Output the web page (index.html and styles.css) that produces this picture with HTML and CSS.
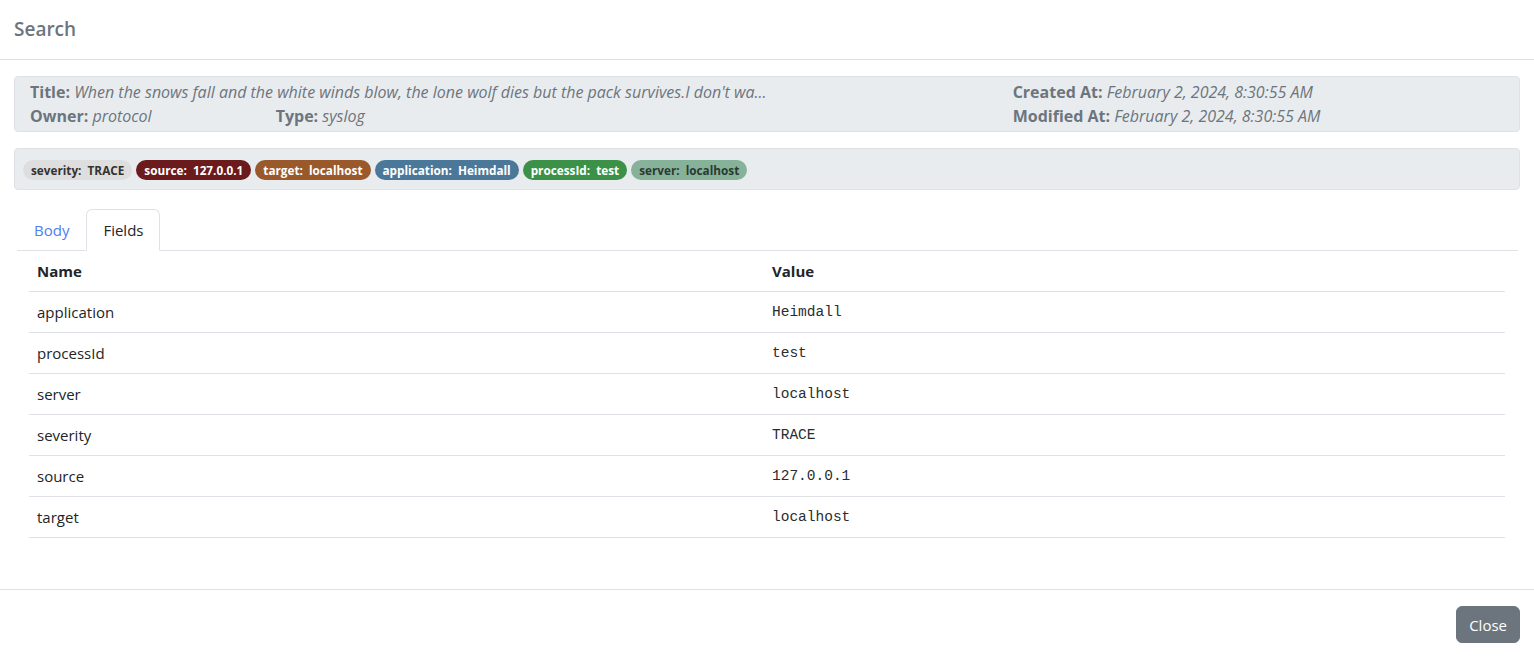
FILE: index.html
```html
<!DOCTYPE html>
<html lang="en">
<head>
<meta charset="utf-8">
<title>Search</title>
<link rel="stylesheet" href="styles.css">
</head>
<body>
<div class="modal">
  <div class="modal-header">
    <h5 class="modal-title">Search</h5>
  </div>
  <div class="modal-body">
    <div class="info-panel">
      <div class="info-row">
        <div class="col-8 truncate"><span class="lbl">Title:</span> <span class="val">When the snows fall and the white winds blow, the lone wolf dies but the pack survives.I don't wa...</span></div>
        <div class="col-4"><span class="lbl">Created At:</span> <span class="val">February 2, 2024, 8:30:55 AM</span></div>
      </div>
      <div class="info-row">
        <div class="col-2"><span class="lbl">Owner:</span> <span class="val">protocol</span></div>
        <div class="col-6"><span class="lbl">Type:</span> <span class="val">syslog</span></div>
        <div class="col-4"><span class="lbl">Modified At:</span> <span class="val">February 2, 2024, 8:30:55 AM</span></div>
      </div>
    </div>

    <div class="tag-panel">
      <span class="badge b-severity">severity:&nbsp; TRACE</span>
      <span class="badge b-source">source:&nbsp; 127.0.0.1</span>
      <span class="badge b-target">target:&nbsp; localhost</span>
      <span class="badge b-application">application:&nbsp; Heimdall</span>
      <span class="badge b-process">processId:&nbsp; test</span>
      <span class="badge b-server">server:&nbsp; localhost</span>
    </div>

    <div class="tabs">
      <a class="tab">Body</a>
      <a class="tab active">Fields</a>
    </div>

    <div class="tab-content">
      <table class="fields">
        <colgroup><col class="name-col"><col></colgroup>
        <thead>
          <tr><th>Name</th><th>Value</th></tr>
        </thead>
        <tbody>
          <tr><td>application</td><td class="mono">Heimdall</td></tr>
          <tr><td>processId</td><td class="mono">test</td></tr>
          <tr><td>server</td><td class="mono">localhost</td></tr>
          <tr><td>severity</td><td class="mono">TRACE</td></tr>
          <tr><td>source</td><td class="mono">127.0.0.1</td></tr>
          <tr><td>target</td><td class="mono">localhost</td></tr>
        </tbody>
      </table>
    </div>
  </div>
  <div class="modal-footer">
    <button class="btn">Close</button>
  </div>
</div>
</body>
</html>
```

FILE: styles.css
```css
* { box-sizing: border-box; }

html, body {
  margin: 0;
  padding: 0;
  background: #fff;
}

body {
  font-family: "Open Sans", "Noto Sans", sans-serif;
  font-size: 15px;
  line-height: 24px;
  color: #212529;
}

.modal {
  width: 1534px;
  height: 658px;
  display: flex;
  flex-direction: column;
}

.modal-header {
  height: 60px;
  padding: 0 14px;
  display: flex;
  align-items: center;
  border-bottom: 1px solid #dee2e6;
}

.modal-title {
  margin: 0;
  font-size: 19px;
  font-weight: 600;
  color: #6c757d;
  line-height: 28px;
  padding-bottom: 2px;
}

.modal-body {
  flex: 1;
  padding: 16px 14px 0 14px;
}

.info-panel {
  background: #e9ecef;
  border: 1px solid #dee2e6;
  border-radius: 4px;
  padding: 3px 15px;
  color: #6c757d;
  font-size: 16px;
}

.info-row {
  display: grid;
  grid-template-columns: repeat(12, 1fr);
  height: 24px;
  line-height: 24px;
}

.col-2 { grid-column: span 2; }
.col-4 { grid-column: span 4; }
.col-6 { grid-column: span 6; }
.col-8 { grid-column: span 8; }

.truncate {
  white-space: nowrap;
  overflow: hidden;
}

.lbl { font-weight: 700; }
.val { font-style: italic; }

.tag-panel {
  margin-top: 16px;
  background: #e9ecef;
  border: 1px solid #dee2e6;
  border-radius: 4px;
  padding: 11px 8px 9px;
  display: flex;
  gap: 4px;
  height: 42px;
}

.badge {
  display: inline-flex;
  align-items: center;
  height: 20px;
  padding: 0 8px;
  border-radius: 10px;
  font-size: 11.75px;
  font-weight: 700;
  line-height: 20px;
  color: #fff;
  white-space: nowrap;
}

.b-severity { background: #dedede; color: #333; }
.b-source { background: #6b1b1b; }
.b-target { background: #99592b; }
.b-application { background: #4b7898; }
.b-process { background: #3a9147; }
.b-server { background: #86b29a; color: #2b3a31; }

.tabs {
  margin: 19px 2px 0 3px;
  display: flex;
  border-bottom: 1px solid #dee2e6;
  height: 42px;
}

.tab {
  display: block;
  padding: 8px 16px 9px;
  border: 1px solid transparent;
  border-top-left-radius: 6px;
  border-top-right-radius: 6px;
  color: #4e7ef0;
  margin-bottom: -1px;
  cursor: pointer;
}

.tab.active {
  color: #212529;
  background: #fff;
  border-color: #dee2e6 #dee2e6 #fff;
}

.tab-content {
  padding: 0 15px;
}

.fields {
  width: 100%;
  border-collapse: collapse;
  table-layout: fixed;
  margin-bottom: 36px;
}

.name-col { width: 735px; }

.fields th,
.fields td {
  text-align: left;
  padding: 8px 8px;
  border-bottom: 1px solid #dee2e6;
  height: 41px;
  vertical-align: middle;
}

.fields th {
  font-weight: 700;
  height: 40px;
}

.mono {
  font-family: "Liberation Mono", "DejaVu Sans Mono", monospace;
  font-size: 14.5px;
  color: #2a2d30;
}

.modal-footer {
  border-top: 1px solid #dee2e6;
  height: 69px;
  padding: 16px 14px 0;
  display: flex;
  justify-content: flex-end;
  align-items: flex-start;
}

.btn {
  font-family: inherit;
  font-size: 15px;
  line-height: 24px;
  height: 37px;
  padding: 6px 12px;
  border: 1px solid #6c757d;
  background: #6c757d;
  color: #fff;
  border-radius: 6px;
}
```
